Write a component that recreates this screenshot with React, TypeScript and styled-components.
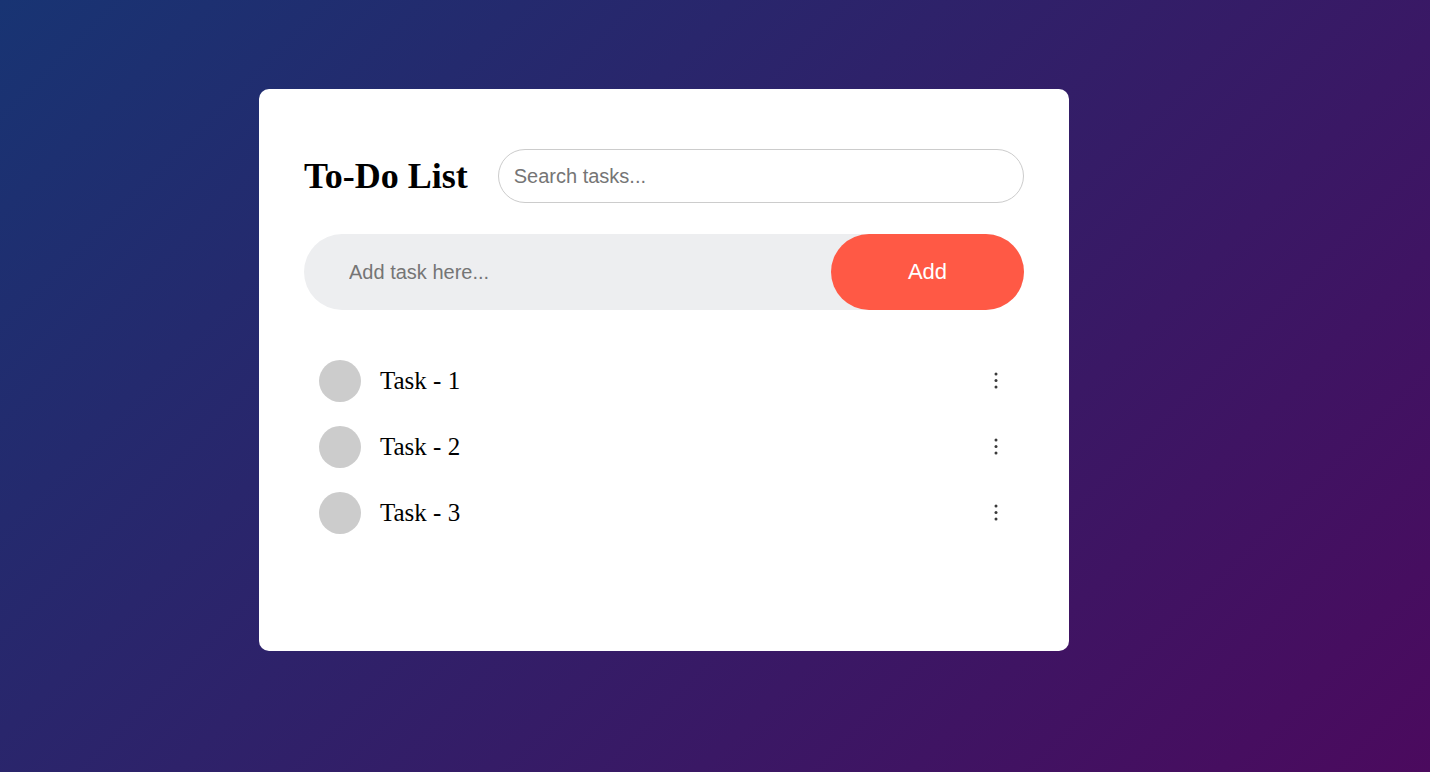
import React from "react";
import styled, { createGlobalStyle } from "styled-components";

const GlobalStyle = createGlobalStyle`
  html, body { margin: 0; padding: 0; }
  body {
    min-height: 100vh;
    background: linear-gradient(135deg, #183473, #4b0a5e);
    font-family: "Liberation Serif", "Times New Roman", serif;
  }
  * { box-sizing: border-box; }
`;

const Page = styled.div`
  min-height: 100vh;
  padding: 89px 0 0 259px;
`;

const Card = styled.div`
  width: 810px;
  height: 562px;
  background: #fff;
  border-radius: 10px;
  padding: 60px 45px 40px;
`;

const Header = styled.div`
  display: flex;
  align-items: center;
  gap: 30px;
`;

const Title = styled.h2`
  margin: 0;
  font-family: "Liberation Serif", "Times New Roman", serif;
  font-weight: 700;
  font-size: 36px;
  line-height: 1.2;
  color: #000;
  white-space: nowrap;
  transform: translateY(1px);
`;

const Search = styled.input`
  flex: 1;
  height: 54px;
  border: 1px solid #ccc;
  border-radius: 27px;
  padding: 0 15px;
  font-family: "Liberation Sans", Arial, sans-serif;
  font-size: 20px;
  color: #333;
  outline: none;
  background: #fff;
  &::placeholder { color: #757575; }
`;

const AddRow = styled.div`
  display: flex;
  align-items: center;
  height: 76px;
  margin-top: 31px;
  background: #edeef0;
  border-radius: 38px;
`;

const AddInput = styled.input`
  flex: 1;
  height: 100%;
  border: none;
  outline: none;
  background: transparent;
  padding: 0 0 0 45px;
  font-family: "Liberation Sans", Arial, sans-serif;
  font-size: 20px;
  color: #333;
  &::placeholder { color: #757575; }
`;

const AddButton = styled.button`
  width: 193px;
  height: 100%;
  border: none;
  border-radius: 38px;
  background: #ff5945;
  color: #fff;
  font-family: "Liberation Sans", Arial, sans-serif;
  font-size: 22px;
  cursor: pointer;
`;

const List = styled.ul`
  list-style: none;
  margin: 38px 0 0;
  padding: 0;
`;

const Item = styled.li`
  display: flex;
  align-items: center;
  height: 66px;
  padding-left: 15px;
`;

const Check = styled.span`
  width: 42px;
  height: 42px;
  border-radius: 50%;
  background: #cccccc;
  flex-shrink: 0;
`;

const TaskText = styled.span`
  margin-left: 19px;
  font-family: "Liberation Serif", "Times New Roman", serif;
  font-size: 25px;
  color: #000;
`;

const Menu = styled.button`
  margin-left: auto;
  margin-right: 20px;
  width: 16px;
  height: 24px;
  padding: 0;
  border: none;
  background: none;
  display: flex;
  align-items: center;
  justify-content: center;
  color: #3a3a3a;
  cursor: pointer;
`;

const Kebab = () => (
  <svg width="4" height="18" viewBox="0 0 4 18" aria-hidden="true">
    <circle cx="2" cy="2" r="1.5" fill="currentColor" />
    <circle cx="2" cy="8.5" r="1.5" fill="currentColor" />
    <circle cx="2" cy="15" r="1.5" fill="currentColor" />
  </svg>
);

const tasks = ["Task - 1", "Task - 2", "Task - 3"];

export default function App() {
  return (
    <>
      <GlobalStyle />
      <Page>
        <Card>
          <Header>
            <Title>To-Do List</Title>
            <Search placeholder="Search tasks..." />
          </Header>
          <AddRow>
            <AddInput placeholder="Add task here..." />
            <AddButton>Add</AddButton>
          </AddRow>
          <List>
            {tasks.map((t) => (
              <Item key={t}>
                <Check />
                <TaskText>{t}</TaskText>
                <Menu aria-label="More">
                  <Kebab />
                </Menu>
              </Item>
            ))}
          </List>
        </Card>
      </Page>
    </>
  );
}
